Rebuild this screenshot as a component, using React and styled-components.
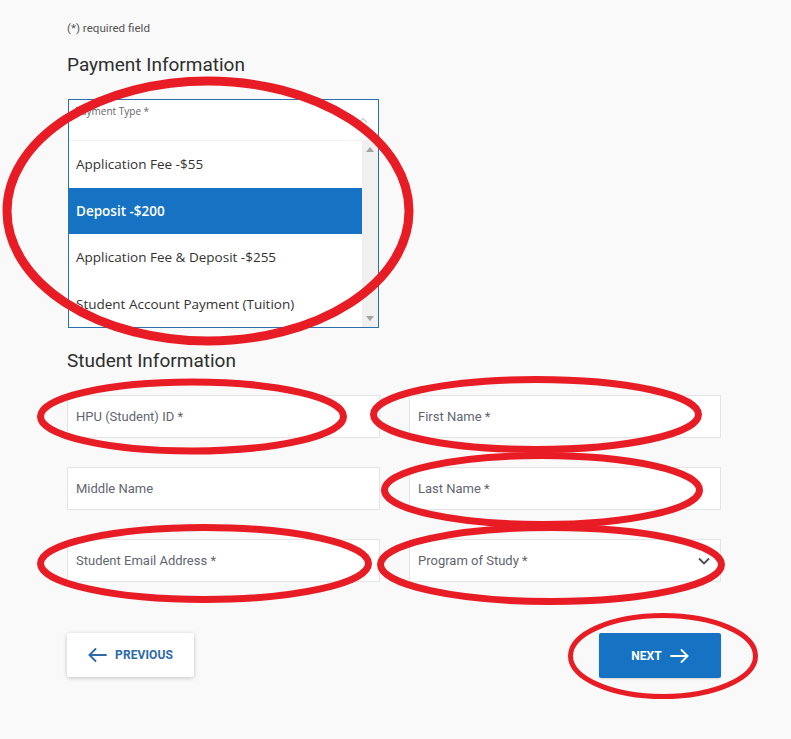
import React from "react";
import styled, { createGlobalStyle } from "styled-components";

const GlobalStyle = createGlobalStyle`
  html, body { margin: 0; padding: 0; background: #f9f9f9; }
  * { box-sizing: border-box; }
`;

const Page = styled.div`
  position: relative;
  width: 791px;
  height: 739px;
  overflow: hidden;
  padding: 21px 0 0 67px;
  font-family: Roboto, "Liberation Sans", sans-serif;
`;

const Content = styled.div`
  width: 654px;
  display: flex;
  flex-direction: column;
`;

const Required = styled.div`
  font-size: 11.6px;
  line-height: 14px;
  color: #555;
`;

const Heading = styled.h2`
  margin: ${(p) => p.$top}px 0 0;
  font-family: Roboto, "Liberation Sans", sans-serif;
  font-weight: 400;
  font-size: 19px;
  line-height: 22px;
  color: #2e2e2e;
`;

const SelectBox = styled.div`
  margin: 23px 0 0 1px;
  width: 311px;
  border: 1px solid #2a6fae;
  background: #fff;
  display: flex;
  flex-direction: column;
`;

const SelectHeader = styled.div`
  position: relative;
  height: 40px;
  padding: 4px 0 0 6px;
  font-family: "Open Sans", Roboto, sans-serif;
  font-size: 10px;
  color: #666;
`;

const HeaderChevron = styled.svg`
  position: absolute;
  right: 10px;
  top: 17px;
`;

const ListBox = styled.div`
  height: 187px;
  display: flex;
  border-top: 1px solid #f1f1f1;
`;

const Options = styled.div`
  flex: 1;
  display: flex;
  flex-direction: column;
`;

const Option = styled.div`
  flex: 1;
  display: flex;
  align-items: center;
  padding-left: 7px;
  font-family: "Open Sans", Roboto, sans-serif;
  font-size: 13.5px;
  font-weight: ${(p) => (p.$selected ? 600 : 400)};
  color: ${(p) => (p.$selected ? "#fff" : "#333")};
  background: ${(p) => (p.$selected ? "#1673c4" : "#fff")};
`;

const Scrollbar = styled.div`
  width: 16px;
  background: #f0f0f0;
  display: flex;
  flex-direction: column;
  justify-content: space-between;
  align-items: center;
  padding: 6px 0 6px;
`;

const Grid = styled.div`
  margin-top: 23px;
  display: grid;
  grid-template-columns: 313px 312px;
  column-gap: 29px;
  row-gap: 29px;
`;

const Field = styled.div`
  height: 43px;
  background: #fff;
  border: 1px solid #e4e4e4;
  display: flex;
  align-items: center;
  justify-content: space-between;
  padding: 0 10px 0 8px;
  font-size: 13px;
  color: #5f6670;
`;

const ButtonRow = styled.div`
  margin-top: 51px;
  display: flex;
  justify-content: space-between;
  align-items: flex-start;
`;

const Button = styled.div`
  width: ${(p) => p.$w}px;
  height: ${(p) => p.$h}px;
  display: flex;
  align-items: center;
  justify-content: center;
  gap: 8px;
  border-radius: 2px;
  font-size: 12px;
  font-weight: 700;
  letter-spacing: 0.1px;
  background: ${(p) => (p.$primary ? "#1673c4" : "#fff")};
  color: ${(p) => (p.$primary ? "#fff" : "#2d6aa8")};
  box-shadow: ${(p) =>
    p.$primary ? "0 1px 2px rgba(0,0,0,0.15)" : "0 1px 4px rgba(0,0,0,0.22)"};
`;

const Overlay = styled.svg`
  position: absolute;
  top: 0;
  left: 0;
  pointer-events: none;
`;

const Arrow = ({ dir }) => (
  <svg width="19" height="14" viewBox="0 0 19 14" fill="none" stroke="currentColor" strokeWidth="1.8" strokeLinecap="round" strokeLinejoin="round">
    {dir === "left" ? (
      <>
        <path d="M18 7H1.5" />
        <path d="M7.5 1L1.5 7l6 6" />
      </>
    ) : (
      <>
        <path d="M1 7h16.5" />
        <path d="M11.5 1l6 6-6 6" />
      </>
    )}
  </svg>
);

const Tri = ({ up }) => (
  <svg width="8" height="5" viewBox="0 0 8 5">
    <path d={up ? "M0 5L4 0l4 5z" : "M0 0l4 5 4-5z"} fill="#a3a3a3" />
  </svg>
);

const fields = [
  "HPU (Student) ID *",
  "First Name *",
  "Middle Name",
  "Last Name *",
  "Student Email Address *",
  "Program of Study *",
];

const options = [
  "Application Fee -$55",
  "Deposit -$200",
  "Application Fee & Deposit -$255",
  "Student Account Payment (Tuition)",
];

const ellipses = [
  { cx: 208, cy: 211, rx: 201, ry: 130, w: 9 },
  { cx: 192, cy: 416.5, rx: 151.5, ry: 34.5, w: 7 },
  { cx: 536, cy: 414.5, rx: 162.5, ry: 35, w: 7 },
  { cx: 542, cy: 490, rx: 157.5, ry: 34.5, w: 7 },
  { cx: 204.5, cy: 563.5, rx: 164, ry: 36, w: 7 },
  { cx: 551, cy: 564.5, rx: 170.5, ry: 37, w: 7 },
  { cx: 663, cy: 656, rx: 92.5, ry: 40.5, w: 5 },
];

export default function App() {
  return (
    <>
      <GlobalStyle />
      <Page>
        <Content>
          <Required>(*) required field</Required>
          <Heading $top={19}>Payment Information</Heading>
          <SelectBox>
            <SelectHeader>
              Payment Type *
              <HeaderChevron width="10" height="6" viewBox="0 0 10 6">
                <path d="M1 5.5L5 1.5l4 4" stroke="#cfcfcf" strokeWidth="1.4" fill="none" />
              </HeaderChevron>
            </SelectHeader>
            <ListBox>
              <Options>
                {options.map((o, i) => (
                  <Option key={o} $selected={i === 1}>
                    {o}
                  </Option>
                ))}
              </Options>
              <Scrollbar>
                <Tri up />
                <Tri />
              </Scrollbar>
            </ListBox>
          </SelectBox>
          <Heading $top={22}>Student Information</Heading>
          <Grid>
            {fields.map((f) => (
              <Field key={f}>
                <span>{f}</span>
                {f.startsWith("Program") && (
                  <svg width="12" height="8" viewBox="0 0 12 8">
                    <path d="M1 1.5l5 5 5-5" stroke="#4a4f55" strokeWidth="1.8" fill="none" />
                  </svg>
                )}
              </Field>
            ))}
          </Grid>
          <ButtonRow>
            <Button $w={127} $h={44}>
              <Arrow dir="left" />
              PREVIOUS
            </Button>
            <Button $w={122} $h={45} $primary>
              NEXT
              <Arrow dir="right" />
            </Button>
          </ButtonRow>
        </Content>
        <Overlay width="791" height="739" viewBox="0 0 791 739">
          {ellipses.map((e, i) => (
            <ellipse key={i} cx={e.cx} cy={e.cy} rx={e.rx} ry={e.ry} fill="none" stroke="#e81c24" strokeWidth={e.w} />
          ))}
        </Overlay>
      </Page>
    </>
  );
}
